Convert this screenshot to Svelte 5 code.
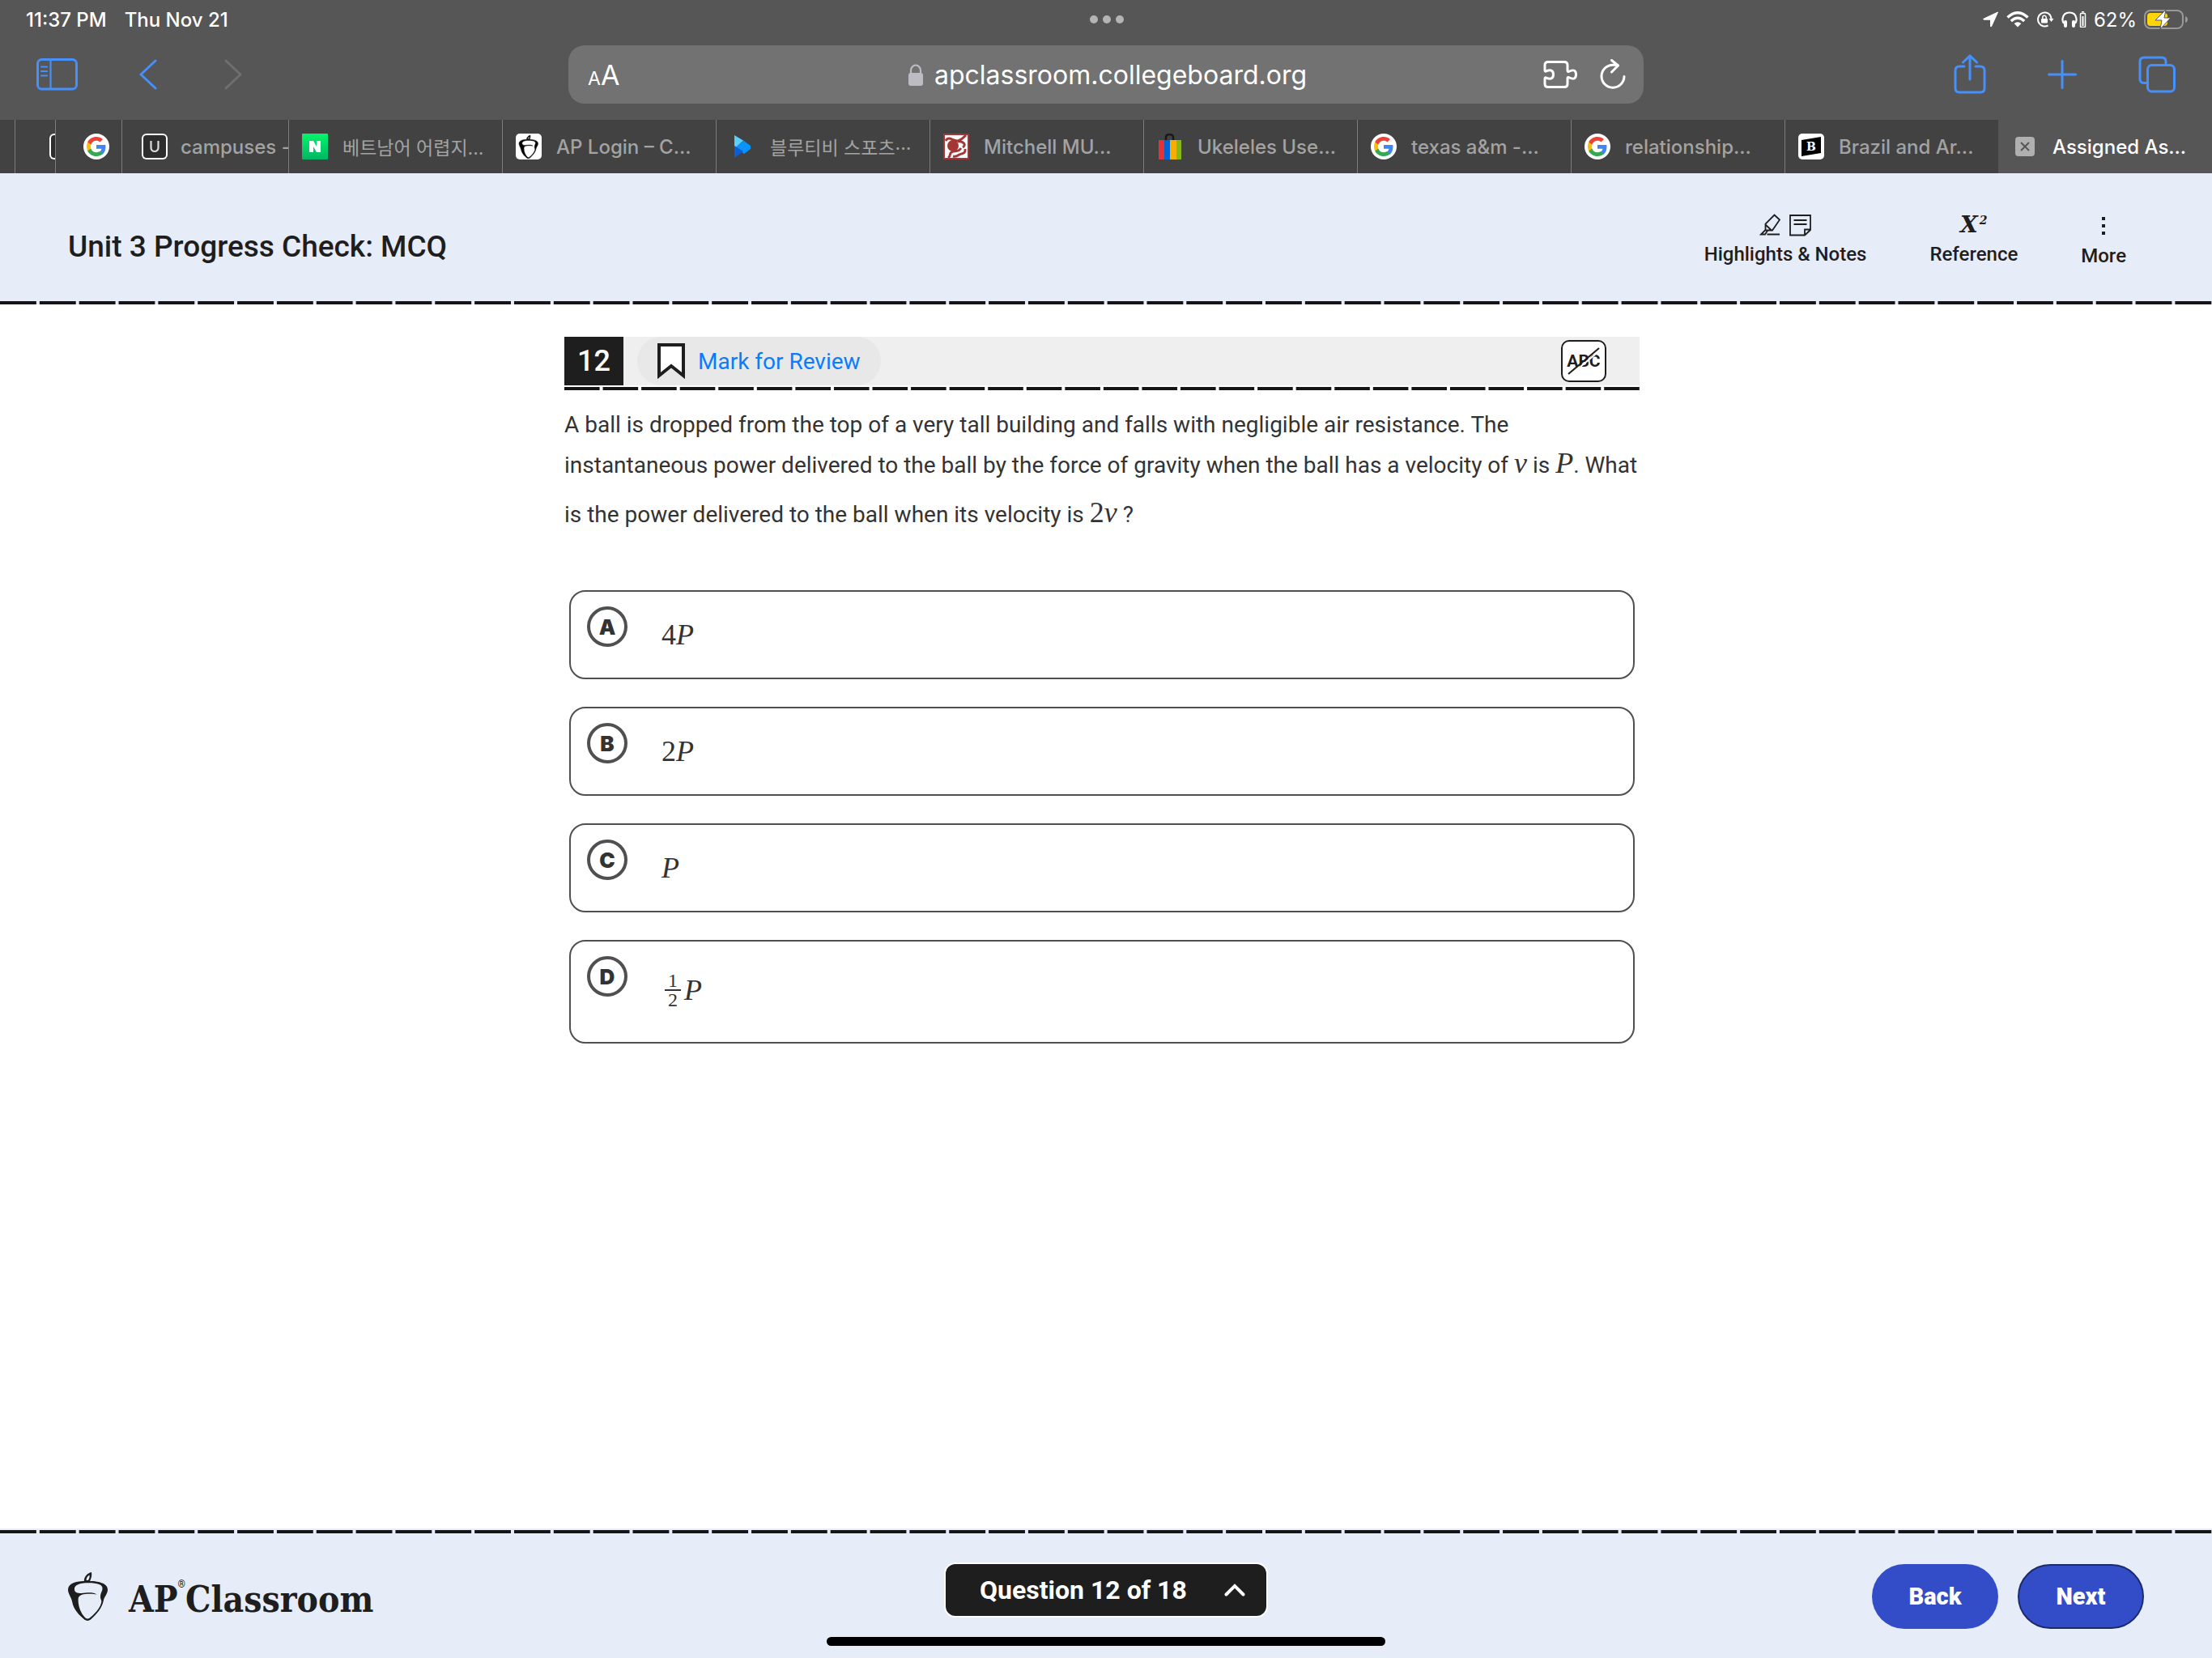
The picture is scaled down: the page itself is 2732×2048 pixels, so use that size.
<script>
    let tabs = [
        { icon: "naver", title: "베트남어 어렵지...", lang: "ko" },
        { icon: "acorn", title: "AP Login – C..." },
        { icon: "play", title: "블루티비 스포츠···", lang: "ko" },
        { icon: "mitchell", title: "Mitchell MU..." },
        { icon: "ebay", title: "Ukeleles Use..." },
        { icon: "google", title: "texas a&m -..." },
        { icon: "google", title: "relationship..." },
        { icon: "britannica", title: "Brazil and Ar..." }
    ];

    let choices = [
        { letter: "A", number: "4" },
        { letter: "B", number: "2" },
        { letter: "C", number: "" },
        { letter: "D", fraction: ["1", "2"] }
    ];

    let selected = $state("");
</script>

{#snippet acorn()}
    <path fill-rule="evenodd" d="M24 10.7C8 10.7 0 14.5 0 21.5C0 27 4 30.5 5 36C7 47 14 53 20.5 58.8C23 60.4 25.5 60.4 28 58.5C35 52 42 45 44 34.5C44.4 31 49 27 49 21.5C49 13.5 37 10.7 24 10.7ZM25 13.3C37 13.3 42.5 15.5 42.5 20C42.5 24 40 25 40 31C40 34 42 34 41 38C39 46 31 53 26.5 56.8Q24 58.3 21.5 56.5C16 51 12.6 43 12.6 34C12.6 28.5 17 27.3 24 26.8C29 26.5 32 26.8 35.6 27.5C33 25.5 29 25 24 25.2C17 25.5 12 27.5 8.5 23.5C6 17 12 13.3 25 13.3Z" />
    <path fill-rule="evenodd" d="M19.9 11C19.5 6 24 1 29 0C30 4 28.500 8 26.800 11.500ZM22.600 10C22.500 7 24.500 4.500 26.500 3.500C27 6 26 8.500 24.800 10Z" />
{/snippet}

{#snippet favicon(name)}
    <svg class="favicon" viewBox="0 0 32 32" aria-hidden="true">
        {#if name === "google"}
            <circle cx="16" cy="16" r="16" fill="#fff" />
            <g transform="translate(4 4)">
                <path fill="#4285f4" d="M23.500 12.300c0-.9-.1-1.500-.2-2.200H12v4.600h6.500c-.3 1.500-1.200 2.800-2.500 3.700v3h4c2.300-2.200 3.500-5.300 3.500-9.100z" />
                <path fill="#34a853" d="M12 24c3.200 0 6-1.100 8-2.900l-4-3c-1.100.7-2.500 1.200-4 1.200-3.100 0-5.800-2.100-6.700-4.900H1.200v3.100C3.200 21.400 7.300 24 12 24z" />
                <path fill="#fbbc05" d="M5.300 14.400c-.5-1.600-.5-3.200 0-4.800V6.500H1.200c-1.600 3.500-1.600 7.500 0 11z" />
                <path fill="#ea4335" d="M12 4.800c1.800 0 3.300.6 4.600 1.800L20 3.100C17.900 1.200 15.200 0 12 0 7.300 0 3.200 2.600 1.200 6.500l4.100 3.100C6.200 6.900 8.900 4.800 12 4.800z" />
            </g>
        {:else if name === "u"}
            <rect width="32" height="32" rx="6" fill="#fff" />
            <rect x="2" y="2" width="28" height="28" rx="4" fill="#2d2d2d" />
            <path d="M11.500 9v8.500a4.500 4.500 0 0 0 9 0V9" fill="none" stroke="#ddd" stroke-width="2.200" />
        {:else if name === "naver"}
            <defs>
                <linearGradient id="naver" x2="0" y2="1">
                    <stop stop-color="#03f56c" />
                    <stop offset="1" stop-color="#02b564" />
                </linearGradient>
            </defs>
            <rect width="32" height="32" rx="1" fill="url(#naver)" />
            <path d="M9 23V9h5l4 7V9h5v14h-5l-4-7v7z" fill="#fff" />
        {:else if name === "acorn"}
            <rect width="32" height="32" rx="5" fill="#fff" />
            <g transform="translate(4 2) scale(0.480)" stroke="#111" stroke-width="1">{@render acorn()}</g>
        {:else if name === "play"}
            <path d="M6 2v17L17 8.500z" fill="#5ad1fb" />
            <path d="M17 8.500 26 15v4l-8 6L8 17z" fill="#0a93fa" />
            <path d="M6 15v15l11-8z" fill="#0a5ed8" />
        {:else if name === "mitchell"}
            <rect width="32" height="32" fill="#fff" />
            <rect x="1" y="1" width="30" height="30" fill="none" stroke="#a43735" stroke-width="2" />
            <path d="M3 9C7 2 12 10 18 9C22 8 24 6 28 2M18 10C25 9 29 14 24 17M22 18C18 24 14 20 10 23C7 25 10 28 6 30M27 19C28 26 22 24 18 27Q15 29 12 28" fill="none" stroke="#a43735" stroke-width="3" />
            <circle cx="12" cy="15" r="7" fill="#a43735" />
        {:else if name === "ebay"}
            <path d="M11 9V5q0-4 4.500-4T20 5v4" fill="none" stroke="#191919" stroke-width="2.500" />
            <path fill="#e53238" d="M2 8h7v24H2z" />
            <path fill="#0064d2" d="M9 8h7v24H9z" />
            <path fill="#f5af02" d="M16 8h8v24h-8z" />
            <path fill="#86b817" d="M24 8h6v24h-6z" />
        {:else if name === "britannica"}
            <rect width="32" height="32" rx="5" fill="#fff" />
            <path d="M4 8 28 4v20L4 28z" fill="#000" />
            <text x="16" y="21" text-anchor="middle" font-family="DejaVu Serif" font-weight="700" font-size="14" fill="#fff">B</text>
        {/if}
    </svg>
{/snippet}

<div class="screen">
    <div class="browser">
        <div class="status">
            <div class="time"><span>11:37 PM</span><span>Thu Nov 21</span></div>
            <svg class="dots" viewBox="0 0 42 10" aria-hidden="true">
                <circle cx="5" cy="5" r="5" /><circle cx="21" cy="5" r="5" /><circle cx="37" cy="5" r="5" />
            </svg>
            <div class="indicators">
                <svg width="20" height="20" viewBox="0 0 20 20" aria-hidden="true"><path d="M18.500 1 1 9.200q-.8.700.2 1H9.500v8.300q.4 1 1.100.1z" fill="#fff" stroke="#fff" stroke-linejoin="round" /></svg>
                <svg width="28" height="20" viewBox="0 0 28 20" fill="none" stroke="#fff" stroke-width="3.400" aria-hidden="true">
                    <path d="M1.500 7.500Q14-4 26.500 7.500M5.800 12Q14 4.500 22.200 12" />
                    <path d="M14 19.500 9.600 15Q14 11.500 18.400 15z" fill="#fff" stroke="none" />
                </svg>
                <svg width="22" height="20" viewBox="0 0 22 20" fill="none" stroke="#fff" stroke-width="2" aria-hidden="true">
                    <path d="M17 4.500A8.500 8.500 0 1 0 14.500 17.500M17 4.500Q18.500 7 18.500 10" />
                    <path d="M15.500 9h6l-3 4z" fill="#fff" stroke="none" />
                    <rect x="6" y="9" width="8" height="5.500" rx="1" fill="#fff" stroke="none" />
                    <path d="M7.800 9V7.500a2.200 2.200 0 0 1 4.400 0V9" stroke-width="1.500" />
                </svg>
                <svg width="31" height="20" viewBox="0 0 31 20" fill="none" stroke="#fff" aria-hidden="true">
                    <path d="M3 15Q1 12 1.500 9Q2.500 1.500 10 1.500T18.500 9Q19 12 17 15" stroke-width="2.200" />
                    <rect x="3" y="11" width="4" height="9" rx="2" fill="#fff" stroke="none" />
                    <rect x="13" y="11" width="4" height="9" rx="2" fill="#fff" stroke="none" />
                    <rect x="23.500" y="2.500" width="6" height="17" rx="1" stroke-width="1.500" />
                    <path d="M25.500 6h2v12h-2zM25 0h3v1.500h-3z" fill="#fff" stroke="none" />
                </svg>
                <span>62%</span>
                <svg width="54" height="26" viewBox="0 0 54 26" aria-hidden="true">
                    <rect x="1" y="2" width="47" height="22" rx="7" fill="none" stroke="#999" stroke-width="2" />
                    <path d="M51 9q3 1 3 4t-3 4z" fill="#999" />
                    <rect x="4" y="5" width="25" height="16" rx="4" fill="#ffd60a" />
                    <path d="M27 1 14 14h8l-2 11 13-14h-8z" fill="#fff" stroke="#565656" stroke-width="1" />
                </svg>
            </div>
        </div>

        <div class="toolbar">
            <div class="tools left">
                <button aria-label="Sidebar">
                    <svg width="51" height="40" viewBox="0 0 51 40"><rect x="1.500" y="1.500" width="48" height="36.500" rx="5" /><path d="M17.500 2v36M6 10.500h7M6 16h7M6 21.500h7" stroke-width="2.200" /></svg>
                </button>
                <button aria-label="Back one page">
                    <svg width="28" height="38" viewBox="0 0 28 38"><path d="M20 2 2 19l18 17" /></svg>
                </button>
                <button aria-label="Forward one page" disabled>
                    <svg width="28" height="38" viewBox="0 0 28 38"><path d="m3 2 18 17L3 36" /></svg>
                </button>
            </div>
            <div class="address">
                <button class="reader" aria-label="Page settings"><small>A</small>A</button>
                <div class="url">
                    <svg width="18" height="27" viewBox="0 0 18 27" aria-hidden="true"><rect y="11" width="18" height="16" rx="3" fill="#bdbcc3" /><path d="M3 12V8a6 6.500 0 0 1 12 0v4" fill="none" stroke="#bdbcc3" stroke-width="2.200" /></svg>
                    <span>apclassroom.collegeboard.org</span>
                </div>
                <button aria-label="Extensions">
                    <svg width="42" height="34" viewBox="0 0 42 34"><path d="M6 1.500h20q4 0 4 4V12q0 2.500 2.500 1 8-3.500 8 4t-8 4q-2.500-1.500-2.500 1v6.500q0 4-4 4H6q-4 0-4-4V22q0-2 2.500-.5 8 2.500 8-4.500t-8-4.500Q2 14 2 12V5.500q0-4 4-4z" /></svg>
                </button>
                <button aria-label="Reload">
                    <svg width="32" height="38" viewBox="0 0 32 38"><path d="M30 21.500a14 14 0 1 1-14-14.300h6M14.500 1.500 22.500 8l-8 8" /></svg>
                </button>
            </div>
            <div class="tools right">
                <button aria-label="Share">
                    <svg width="40" height="50" viewBox="0 0 40 50"><path d="M13 15H7q-5 0-5 5v22q0 5 5 5h26q5 0 5-5V20q0-5-5-5h-6M20 31V2M11.500 10 20 1.800 28.500 10" /></svg>
                </button>
                <button aria-label="New tab">
                    <svg width="36" height="36" viewBox="0 0 36 36"><path d="M18 1.500v33M1.500 18h33" /></svg>
                </button>
                <button aria-label="Show tabs">
                    <svg width="46" height="46" viewBox="0 0 46 46"><path d="M10 33.500H7q-5 0-5-5V7q0-5 5-5h22q5 0 5 5v2.500" /><rect x="11.500" y="11.500" width="33" height="32.500" rx="5" /></svg>
                </button>
            </div>
        </div>

        <nav class="tabs" aria-label="Open tabs">
            <a href="#tab" class="tab sliver" aria-label="Hidden tab">{@render favicon("u")}</a>
            <a href="#tab" class="tab pinned" aria-label="Google">{@render favicon("google")}</a>
            <a href="#tab" class="tab cut">{@render favicon("u")}<span>campuses -</span></a>
            {#each tabs as tab}
                <a href="#tab" class="tab" lang={tab.lang}>{@render favicon(tab.icon)}<span>{tab.title}</span></a>
            {/each}
            <div class="tab current">
                <button aria-label="Close tab"><svg width="24" height="24" viewBox="0 0 24 24"><rect width="24" height="24" rx="4" fill="#b0b0b0" /><path d="m7 7 10 10M17 7 7 17" stroke="#565656" stroke-width="2" /></svg></button>
                <span>Assigned As...</span>
            </div>
        </nav>
    </div>

    <header>
        <h1>Unit 3 Progress Check: MCQ</h1>
        <div class="header-tools">
            <button>
                <svg width="64" height="28" viewBox="0 0 64 28" fill="none" stroke="#1e1e1e" stroke-width="1.800" aria-hidden="true">
                    <path d="M18.500 1.500 25 7.500 16 20.500H7.500V12.500zM7.500 13.500l7.500 7M7.500 20 2 25.500h5l3-4.500M9.500 25.500H25" />
                    <path d="M38 2h25v18l-7 6.500H38zM63 19.500h-7V26M42.500 8h16M42.500 13h16" />
                </svg>
                Highlights &amp; Notes
            </button>
            <button>
                <span class="x2"><b>X</b><sup>2</sup></span>
                Reference
            </button>
            <button>
                <svg class="kebab" width="6" height="22" viewBox="0 0 6 22" aria-hidden="true"><path d="M1 0h4v4H1zM1 9h4v4H1zM1 18h4v4H1z" fill="#1e1e1e" /></svg>
                More
            </button>
        </div>
    </header>
    <div class="dashes"></div>

    <main>
        <div class="question">
            <div class="question-bar">
                <span class="number">12</span>
                <button class="mark">
                    <svg width="34" height="44" viewBox="0 0 34 44" aria-hidden="true"><path d="M2 2h30v38L17 28 2 40z" fill="#fff" stroke="#1e1e1e" stroke-width="4" /></svg>
                    Mark for Review
                </button>
                <button class="strike" aria-label="Cross out choices">
                    <svg width="44" height="36" viewBox="0 0 44 36">
                        <text x="22" y="25" text-anchor="middle" font-family="Roboto" font-weight="700" font-size="21" fill="#1e1e1e">ABC</text>
                        <path d="m5 36 38-32" stroke="#fff" stroke-width="2" />
                        <path d="m3 34 38-32" stroke="#1e1e1e" stroke-width="2" />
                    </svg>
                </button>
            </div>
            <div class="dashes short"></div>

            <p>
                A ball is dropped from the top of a very tall building and falls with negligible air resistance. The
                instantaneous power delivered to the ball by the force of gravity when the ball has a velocity of <i class="math">v</i> is <i class="math">P</i>. What
                is the power delivered to the ball when its velocity is <span class="math tall">2<i>v</i></span> ?
            </p>

            <div class="choices" role="radiogroup" aria-label="Answer choices">
                {#each choices as choice}
                    <label class="choice {choice.fraction ? "high" : ""}">
                        <span class="letter">
                            <input type="radio" name="answer" value={choice.letter} bind:group={selected}>
                            <span>{choice.letter}</span>
                        </span>
                        <span class="math answer">
                            {#if choice.fraction}
                                <span class="fraction"><span>{choice.fraction[0]}</span><span>{choice.fraction[1]}</span></span>
                            {/if}
                            {choice.number}<i>P</i>
                        </span>
                    </label>
                {/each}
            </div>
        </div>
    </main>

    <footer>
        <div class="dashes"></div>
        <div class="footer-row">
            <div class="logo">
                <svg width="49" height="60" viewBox="0 0 49 60" fill="#1e1e1e" aria-hidden="true">{@render acorn()}</svg>
                <span>AP<sup>®</sup>Classroom</span>
            </div>
            <button class="jump">
                Question 12 of 18
                <svg width="26" height="16" viewBox="0 0 26 16" aria-hidden="true"><path d="M2.500 13.500 13 3l10.500 10.500" fill="none" stroke="#fff" stroke-width="4" stroke-linecap="round" /></svg>
            </button>
            <div class="paging">
                <button>Back</button>
                <button class="next">Next</button>
            </div>
        </div>
    </footer>
    <div class="home"></div>
</div>

<style>
    :global(body){
        margin: 0;
    }
    .screen{
        position: relative;
        display: flex;
        flex-direction: column;
        min-height: 100vh;
        background-color: white;
        color: #1e1e1e;
        font-family: Roboto, "Noto Sans CJK KR", sans-serif;
    }
    button{
        padding: 0;
        border: none;
        background: none;
        color: inherit;
        font-family: inherit;
        font-size: inherit;
    }
    svg{
        display: block;
        flex-shrink: 0;
    }

    /* browser chrome */
    .browser{
        background-color: #565656;
        color: white;
        font-family: Inter, "Noto Sans CJK KR", sans-serif;
        font-size: 24px;
    }
    .status{
        display: grid;
        grid-template-columns: 1fr auto 1fr;
        align-items: center;
        height: 48px;
        padding: 0 30px 0 32px;
    }
    .time{
        display: flex;
        gap: 22px;
        font-weight: 500;
    }
    .dots{
        width: 42px;
        fill: #b4b4b4;
    }
    .indicators{
        display: flex;
        align-items: center;
        justify-content: flex-end;
        gap: 9px;
    }
    .toolbar{
        display: grid;
        grid-template-columns: 1fr minmax(0, 1328px) 1fr;
        align-items: center;
        padding: 8px 45px 20px 45px;
    }
    .tools{
        display: flex;
        align-items: center;
        gap: 76px;
    }
    .tools.right{
        justify-content: flex-end;
    }
    .toolbar button svg{
        fill: none;
        stroke: #4590fb;
        stroke-width: 3;
        stroke-linecap: round;
        stroke-linejoin: round;
    }
    .toolbar button:disabled svg{
        stroke: #6f6f6f;
    }
    .toolbar .address button svg{
        stroke: white;
    }
    .address{
        display: flex;
        align-items: center;
        gap: 28px;
        height: 72px;
        padding: 0 22px 0 24px;
        border-radius: 20px;
        background-color: #727272;
    }
    .reader{
        width: 104px;
        text-align: left;
        font-size: 34px;
    }
    .reader small{
        font-size: 23px;
    }
    .url{
        display: flex;
        flex: 1;
        align-items: center;
        justify-content: center;
        gap: 14px;
        font-size: 32px;
    }
    .tabs{
        display: flex;
        height: 66px;
        padding-left: 18px;
        background-color: #424242;
        font-weight: 500;
    }
    .tab{
        display: flex;
        flex: 1 1 40px;
        align-items: center;
        gap: 18px;
        box-sizing: border-box;
        min-width: 0;
        padding-left: 16px;
        border-left: 1px solid #7c7c7c;
        overflow: hidden;
        color: #a3a3a3;
        text-decoration: none;
        white-space: nowrap;
    }
    .tab:lang(ko){
        font-size: 23px;
        font-weight: 400;
    }
    .tab.sliver{
        flex: 0 0 50px;
        padding-left: 42px;
    }
    .tab.pinned{
        flex: 0 0 82px;
        padding-left: 34px;
    }
    .tab.cut{
        flex: 0 0 206px;
        padding-left: 24px;
        gap: 16px;
    }
    .tab.current{
        gap: 22px;
        padding-left: 20px;
        border-color: #565656;
        background-color: #565656;
        color: white;
    }
    .favicon{
        width: 32px;
        height: 32px;
    }

    /* page header */
    header{
        display: flex;
        align-items: center;
        justify-content: space-between;
        height: 158px;
        box-sizing: border-box;
        padding: 4px 106px 0 84px;
        background-color: #e6ecf8;
    }
    h1{
        margin: 18px 0 0 0;
        font-size: 37px;
        font-weight: 500;
    }
    .header-tools{
        display: flex;
        align-items: flex-start;
        gap: 78px;
        font-size: 24px;
        font-weight: 500;
    }
    .header-tools button{
        display: flex;
        flex-direction: column;
        align-items: center;
        gap: 8px;
        margin-top: 4px;
        font-weight: 500;
        line-height: 28px;
    }
    .x2{
        display: flex;
        gap: 2px;
        font-family: "DejaVu Serif", serif;
        font-style: italic;
        font-size: 28px;
    }
    .x2 sup{
        font-size: 14px;
        font-weight: 700;
        line-height: 16px;
    }
    .kebab{
        margin: 4px 0;
    }
    .dashes{
        height: 4px;
        background-color: #e6ecf8;
        overflow: hidden;
    }
    .dashes::before{
        content: "";
        display: block;
        width: calc(100% + 4px);
        height: 4px;
        background: linear-gradient(90deg, #151515 92%, transparent 92%) 0 0 / 49px 4px round;
    }
    .dashes.short{
        margin-top: 2px;
        background-color: white;
    }
    .dashes.short::before{
        background-size: 48px 4px;
    }

    /* question */
    main{
        flex: 1;
        padding: 40px 10px 40px 0;
    }
    .question{
        max-width: 1328px;
        margin: 0 auto;
    }
    .question-bar{
        display: flex;
        align-items: center;
        height: 60px;
        background-color: #efefef;
    }
    .number{
        width: 73px;
        background-color: #1e1e1e;
        color: white;
        font-size: 36px;
        font-weight: 500;
        line-height: 60px;
        text-align: center;
    }
    .mark{
        display: flex;
        align-items: center;
        gap: 16px;
        height: 60px;
        margin-left: 17px;
        padding: 0 25px;
        border-radius: 30px;
        background-color: #e8e8e8;
        color: #0a7cff;
        font-size: 28px;
    }
    .strike{
        display: flex;
        align-items: center;
        justify-content: center;
        width: 56px;
        height: 52px;
        margin: 0 41px 0 auto;
        border: 2px solid #1e1e1e;
        border-radius: 10px;
        background-color: white;
    }
    p{
        margin: 18px 0 68px 0;
        color: #333;
        font-size: 28px;
        line-height: 50px;
    }
    .math{
        color: #333;
        font-family: "Liberation Serif", serif;
        font-size: 36px;
        line-height: 34px;
    }
    .math.tall{
        display: inline-block;
        margin-top: 16px;
    }
    .choices{
        display: flex;
        flex-direction: column;
        gap: 34px;
        margin: 0 6px;
    }
    .choice{
        display: flex;
        align-items: center;
        gap: 42px;
        box-sizing: border-box;
        height: 110px;
        padding: 18px 20px;
        border: 2px solid #505050;
        border-radius: 20px;
    }
    .choice.high{
        height: 128px;
        padding-bottom: 22px;
    }
    .letter{
        display: grid;
        align-self: flex-start;
        place-items: center;
        color: #333;
        font-family: Inter, sans-serif;
        font-size: 26px;
        font-weight: 900;
    }
    .letter > *{
        grid-area: 1 / 1;
    }
    input{
        appearance: none;
        box-sizing: border-box;
        width: 50px;
        height: 50px;
        margin: 0;
        border: 4px solid #505050;
        border-radius: 50%;
    }
    .answer{
        display: flex;
        align-items: center;
    }
    .fraction{
        display: flex;
        flex-direction: column;
        margin: 0 4px;
        font-size: 24px;
        line-height: 22px;
        text-align: center;
    }
    .fraction span:first-child{
        padding: 0 4px;
        border-bottom: 2px solid #333;
    }

    /* footer */
    footer{
        height: 160px;
        box-sizing: border-box;
        padding-top: 2px;
        background-color: #e6ecf8;
    }
    .footer-row{
        display: grid;
        grid-template-columns: 1fr auto 1fr;
        align-items: flex-start;
        padding: 38px 84px 0 84px;
    }
    .logo{
        display: flex;
        align-items: flex-start;
        gap: 26px;
        margin-top: 10px;
        font-family: "DejaVu Serif Condensed", "DejaVu Serif", serif;
        font-size: 44px;
        font-weight: 700;
        line-height: 68px;
    }
    .logo sup{
        font-family: Roboto, sans-serif;
        font-size: 12px;
        font-weight: 400;
        line-height: 0;
        vertical-align: 30px;
    }
    .jump{
        display: flex;
        align-items: center;
        justify-content: space-between;
        box-sizing: border-box;
        min-width: 396px;
        height: 64px;
        padding: 0 26px 0 42px;
        border-radius: 12px;
        box-shadow: 0 0 0 2px white;
        background-color: #1e1e1e;
        color: white;
        font-size: 32px;
        font-weight: 700;
    }
    .paging{
        display: flex;
        justify-content: flex-end;
        gap: 24px;
    }
    .paging button{
        width: 156px;
        height: 80px;
        border-radius: 40px;
        background-color: #324dc7;
        color: white;
        font-size: 29px;
        font-weight: 900;
    }
    .paging .next{
        border: 2px solid #1b2a6b;
    }
    .home{
        position: absolute;
        bottom: 15px;
        left: 50%;
        width: 690px;
        height: 11px;
        margin-left: -345px;
        border-radius: 6px;
        background-color: black;
    }
</style>
